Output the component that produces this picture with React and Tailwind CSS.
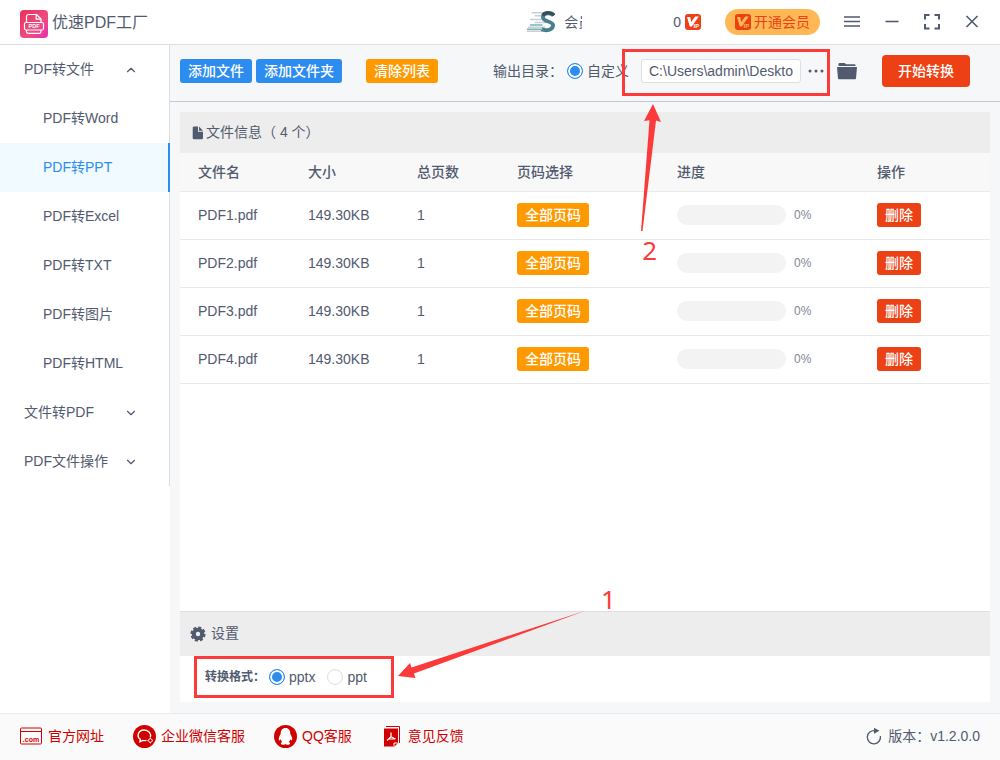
import React, { useState } from 'react';
import { ChevronDown, ChevronUp } from 'lucide-react';

const FORMATS = ['Word', 'PPT', 'Excel', 'TXT', '图片', 'HTML'];

const FILES = [
  { name: 'PDF1.pdf', size: '149.30KB', pages: 1, progress: 0 },
  { name: 'PDF2.pdf', size: '149.30KB', pages: 1, progress: 0 },
  { name: 'PDF3.pdf', size: '149.30KB', pages: 1, progress: 0 },
  { name: 'PDF4.pdf', size: '149.30KB', pages: 1, progress: 0 },
];

const RADIO =
  'h-4 w-4 shrink-0 appearance-none rounded-full border border-[#dcdee2] bg-white checked:border-[#2d8cf0] checked:bg-[#2d8cf0] checked:shadow-[inset_0_0_0_2px_#fff]';

function Logo() {
  return (
    <svg width="28" height="28" viewBox="0 0 28 28" aria-hidden="true">
      <defs>
        <linearGradient id="logoFill" x1="0" y1="0" x2="1" y2="1">
          <stop offset="0" stopColor="#ea2f5c" />
          <stop offset="0.6" stopColor="#ee4c80" />
          <stop offset="1" stopColor="#ea2bb0" />
        </linearGradient>
      </defs>
      <rect width="28" height="28" rx="4" fill="url(#logoFill)" />
      <g fill="none" stroke="#fff" strokeWidth="1.2" strokeLinejoin="round">
        <path d="M6.500 12V6.500a2 2 0 0 1 2-2h8l4.500 4.500v3" />
        <path d="M16.200 4.800V9.200H21" />
        <rect x="4.500" y="12.500" width="19" height="7.500" rx="1.500" />
        <path d="M6.500 20v1.800a1.500 1.500 0 0 0 1.500 1.500h11.500a1.500 1.500 0 0 0 1.500-1.500V20" />
      </g>
      <text x="14" y="18.300" textAnchor="middle" fontSize="5.500" fontWeight="700" fill="#fff" fontFamily="Liberation Sans, sans-serif">
        PDF
      </text>
    </svg>
  );
}

function Avatar() {
  return (
    <svg width="29" height="24" viewBox="0 0 30 24" aria-hidden="true">
      <g stroke="#c3d0d4" strokeWidth="1.500">
        <path d="M5 2.500h14M8 5.500h10M3 9.500h12M8 12.500h12M1 17.500h18M0 21.500h17" />
      </g>
      <path d="M27.500 5.500C25 2 17 2 16.500 7c0 5 10.500 4 10.500 8.500-.5 5-7 6-12 4" fill="none" stroke="#4a7f8a" strokeWidth="4" />
      <path d="M28 5C25 1.500 18 1.500 16.500 5.500" fill="none" stroke="#35505a" strokeWidth="3.500" />
      <path d="M3 15h13M0 19.500h16" stroke="#7fb0b4" strokeWidth="1.500" />
    </svg>
  );
}

function VipIcon({ letter = '#fff' }) {
  return (
    <svg width="16" height="16" viewBox="0 0 16 16" aria-hidden="true" className="shrink-0">
      <rect width="16" height="16" rx="3" fill="#ed4014" />
      <path d="M2 3h3.200l1 5L10.200 2.500h3.600L6.800 12.500H4.800z" fill={letter} />
      <text x="8.500" y="13.800" fontSize="6" fontWeight="700" fill={letter} fontFamily="Liberation Sans, sans-serif">
        IP
      </text>
    </svg>
  );
}

function WindowButton({ label, children }) {
  return (
    <button type="button" aria-label={label} className="flex h-6 w-4 items-center justify-center">
      <svg width="16" height="16" viewBox="0 0 16 16" fill="none" stroke="#515a6e" strokeWidth="1.600" aria-hidden="true">
        {children}
      </svg>
    </button>
  );
}

function Header() {
  return (
    <header className="flex h-[45px] items-center border-b border-[#dcdee2] bg-white px-5">
      <div className="mt-1 flex items-center gap-1">
        <Logo />
        <h1 className="pb-0.5 text-base leading-6">优速PDF工厂</h1>
      </div>
      <div className="ml-auto flex items-center">
        <Avatar />
        <span className="ml-2 w-[18px] overflow-hidden whitespace-nowrap">会员</span>
        <span className="ml-[91px]">0</span>
        <span className="ml-1">
          <VipIcon />
        </span>
        <button type="button" className="ml-6 flex h-[26px] items-center gap-[3px] rounded-[13px] bg-[#ffb855] px-[10px] text-[#ed4014]">
          <VipIcon letter="#ffb855" />
          开通会员
        </button>
        <div className="ml-6 flex gap-6">
          <WindowButton label="菜单">
            <path d="M0 3h16M0 7.500h16M0 12h16" />
          </WindowButton>
          <WindowButton label="最小化">
            <path d="M1.500 7.500h13" />
          </WindowButton>
          <WindowButton label="最大化">
            <path d="M1 5.500V1h4.500M10.500 1H15v4.500M15 10v4.500h-4.500M5.500 14.500H1V10" strokeWidth="2" />
          </WindowButton>
          <WindowButton label="关闭">
            <path d="M2.500 2l11 11M13.500 2l-11 11" />
          </WindowButton>
        </div>
      </div>
    </header>
  );
}

function MenuGroup({ title, open, onClick }) {
  const Chevron = open ? ChevronUp : ChevronDown;
  return (
    <button type="button" onClick={onClick} aria-expanded={open} className="flex h-[49px] w-full items-center justify-between pl-6 pr-[31px] text-left">
      <span className="pb-0.5">{title}</span>
      <Chevron className="h-[14px] w-[14px]" strokeWidth={2} />
    </button>
  );
}

function Sidebar() {
  const [active, setActive] = useState('PPT');
  const [open, setOpen] = useState(true);

  return (
    <aside className="w-[170px] shrink-0 bg-white">
      <nav className="border-r border-[#dcdee2]">
        <MenuGroup title="PDF转文件" open={open} onClick={() => setOpen(!open)} />
        {open &&
          FORMATS.map((format) => (
            <button
              key={format}
              type="button"
              onClick={() => setActive(format)}
              className={
                active === format
                  ? '-mr-px flex h-[49px] w-[170px] items-center border-r-2 border-[#2d8cf0] bg-[#f0faff] pb-0.5 pl-[43px] text-[#2d8cf0]'
                  : 'flex h-[49px] w-full items-center pb-0.5 pl-[43px]'
              }
            >
              PDF转{format}
            </button>
          ))}
        <MenuGroup title="文件转PDF" open={false} />
        <MenuGroup title="PDF文件操作" open={false} />
      </nav>
    </aside>
  );
}

function SmallButton({ color, className, children }) {
  const colors = {
    blue: 'bg-[#2d8cf0]',
    orange: 'bg-[#ff9900]',
    red: 'bg-[#ed4014]',
  };
  return (
    <button type="button" className={`h-6 rounded-[3px] px-2 font-medium leading-6 text-white ${colors[color]} ${className || ''}`}>
      {children}
    </button>
  );
}

function Toolbar() {
  return (
    <div className="relative flex h-[57px] items-center border-b border-[#c5c8ce] pb-1 pl-[10px] pr-[30px]">
      <SmallButton color="blue">添加文件</SmallButton>
      <SmallButton color="blue" className="ml-1">添加文件夹</SmallButton>
      <SmallButton color="orange" className="ml-6">清除列表</SmallButton>

      <div className="ml-auto flex items-center">
        <span>输出目录：</span>
        <label className="ml-1 flex items-center gap-1">
          <input type="radio" name="output" defaultChecked className={RADIO} />
          自定义
        </label>
        <input
          type="text"
          aria-label="输出路径"
          defaultValue="C:\Users\admin\Deskto"
          className="ml-3 h-6 w-40 rounded-[3px] border border-[#dcdee2] bg-white px-[7px]"
        />
        <button type="button" aria-label="选择目录" className="ml-[7px]">
          <svg width="16" height="16" viewBox="0 0 16 16" fill="#515a6e" aria-hidden="true">
            <circle cx="2" cy="8" r="1.500" />
            <circle cx="8" cy="8" r="1.500" />
            <circle cx="14" cy="8" r="1.500" />
          </svg>
        </button>
        <button type="button" aria-label="打开目录" className="ml-[13px]">
          <svg width="20" height="18" viewBox="0 0 20 18" fill="#515a6e" aria-hidden="true">
            <path d="M1.500 4V2a1 1 0 0 1 1-1h5.200l1.300 1.300h8.500a1 1 0 0 1 1 1V4z" />
            <path d="M0 5h20l-1 11.500a1 1 0 0 1-1 .8H2a1 1 0 0 1-1-.8z" />
          </svg>
        </button>
        <button type="button" className="ml-[25px] h-8 rounded bg-[#ed4014] px-4 font-medium text-white">
          开始转换
        </button>
      </div>

      {/* step 2: output folder */}
      <div className="pointer-events-none absolute right-[170px] top-1 h-[47px] w-[208px] border-3 border-[#fc3a3a]" />
      <svg className="pointer-events-none absolute right-[338px] top-[58px]" width="22" height="130" viewBox="0 0 22 130" fill="#fc3a3a" aria-hidden="true">
        <path d="M13 1l8 18-5-1.500L2.500 128H1L9.500 17.200 4 18z" />
      </svg>
      <span className="pointer-events-none absolute right-[343px] top-[189px] font-['Noto_Sans'] text-[26px] leading-8 text-[#fc3a3a]">2</span>
    </div>
  );
}

function FileTable() {
  return (
    <table className="w-full table-fixed border-collapse text-left">
      <colgroup>
        <col className="w-[110px]" />
        <col className="w-[109px]" />
        <col className="w-[100px]" />
        <col className="w-[160px]" />
        <col className="w-[200px]" />
        <col />
      </colgroup>
      <thead>
        <tr className="h-[38px] border-b border-[#e8eaec] bg-[#f8f8f9]">
          {['文件名', '大小', '总页数', '页码选择', '进度', '操作'].map((title) => (
            <th key={title} className="p-0 pl-[18px] font-medium">{title}</th>
          ))}
        </tr>
      </thead>
      <tbody>
        {FILES.map((file) => (
          <tr key={file.name} className="h-12 border-b border-[#e8eaec]">
            <td className="p-0 pl-[18px]">{file.name}</td>
            <td className="p-0 pl-[18px]">{file.size}</td>
            <td className="p-0 pl-[18px]">{file.pages}</td>
            <td className="p-0 pl-[18px]">
              <SmallButton color="orange">全部页码</SmallButton>
            </td>
            <td className="p-0 pl-[18px]">
              <div className="flex items-center">
                <div className="h-5 w-[109px] overflow-hidden rounded-full bg-[#f3f3f3]">
                  <div className="h-full bg-[#2d8cf0]" style={{ width: `${file.progress}%` }} />
                </div>
                <span className="ml-2 text-xs text-[#808695]">{file.progress}%</span>
              </div>
            </td>
            <td className="p-0 pl-[18px]">
              <SmallButton color="red">删除</SmallButton>
            </td>
          </tr>
        ))}
      </tbody>
    </table>
  );
}

function Settings() {
  const [format, setFormat] = useState('pptx');

  return (
    <section className="bg-white">
      <h2 className="flex h-[45px] items-center gap-[5px] border-t border-[#dcdee2] bg-[#ededed] pl-[10px]">
        <svg width="16" height="16" viewBox="0 0 16 16" aria-hidden="true">
          <circle cx="8" cy="8" r="4.200" fill="none" stroke="#515a6e" strokeWidth="4" />
          <circle cx="8" cy="8" r="6.600" fill="none" stroke="#515a6e" strokeWidth="2" strokeDasharray="3.200 1.984" />
        </svg>
        <span className="pb-0.5">设置</span>
      </h2>
      <div className="relative flex h-[46px] items-center pb-1 pl-[25px]">
        <span className="text-xs font-bold">转换格式：</span>
        {['pptx', 'ppt'].map((value) => (
          <label key={value} className="ml-1 mr-2 flex items-center gap-1">
            <input
              type="radio"
              name="format"
              checked={format === value}
              onChange={() => setFormat(value)}
              className={RADIO}
            />
            {value}
          </label>
        ))}

        {/* step 1: target format */}
        <div className="pointer-events-none absolute left-[14px] top-0 h-[42px] w-[200px] border-3 border-[#fc3a3a]" />
        <svg className="pointer-events-none absolute left-[218px] top-[-46px]" width="190" height="70" viewBox="0 0 190 70" fill="#fc3a3a" aria-hidden="true">
          <path d="M0 66l12-13 1.500 4.500L188 .5 16 63.500l1.500 4.500z" />
        </svg>
        <span className="pointer-events-none absolute left-[421px] top-[-73px] font-['Noto_Sans'] text-[26px] leading-8 text-[#fc3a3a]">1</span>
      </div>
    </section>
  );
}

function Footer() {
  return (
    <footer className="flex h-[47px] items-center border-t border-[#e8eaec] bg-[#fafafa] px-5 pb-0.5 text-[#d00000]">
      <a href="#site" className="flex items-center gap-[6px]">
        <svg width="22" height="18" viewBox="0 0 22 18" fill="none" stroke="#d00000" aria-hidden="true">
          <rect x="0.500" y="1" width="21" height="16" rx="1" />
          <path d="M0.500 4.500h21" />
          <text x="11" y="14.500" textAnchor="middle" fontSize="7" fontWeight="700" fill="#d00000" stroke="none" fontFamily="Liberation Sans, sans-serif">
            .com
          </text>
        </svg>
        官方网址
      </a>
      <a href="#wechat" className="ml-[29px] flex items-center gap-[5px]">
        <svg width="23" height="23" viewBox="0 0 23 23" fill="none" stroke="#fff" aria-hidden="true">
          <circle cx="11.500" cy="11.500" r="11.500" fill="#d00000" stroke="none" />
          <path d="M13.500 15.300c-1.200.4-2.600.4-3.800.1L7 16.700l.3-2.400C3 11 5.500 5 11 5c4.800 0 7.500 3.800 6.300 7.300" strokeWidth="1.400" />
          <path d="M17.300 12.800l1 1.700 1.700 1-1.700 1-1 1.700-1-1.700-1.700-1 1.700-1z" />
        </svg>
        企业微信客服
      </a>
      <a href="#qq" className="ml-[29px] flex items-center gap-[5px]">
        <svg width="23" height="23" viewBox="0 0 23 23" aria-hidden="true">
          <circle cx="11.500" cy="11.500" r="11.500" fill="#d00000" />
          <path d="M11.500 3C8 3 6.600 5.500 6.700 9c-1.500 2.200-2.400 4.700-1.700 6.500.6 0 1.200-.5 1.700-1.300.3 1.300.9 2.200 1.700 2.900-1.200.4-1.900 1.200-1.400 2 .8 1 3.500.8 4.500-.2 1 1 3.700 1.200 4.500.2.500-.8-.2-1.600-1.400-2 .8-.7 1.400-1.600 1.700-2.900.5.800 1.100 1.300 1.700 1.300.7-1.800-.2-4.300-1.700-6.500C16.400 5.500 15 3 11.500 3z" fill="#fff" />
        </svg>
        QQ客服
      </a>
      <a href="#feedback" className="ml-8 flex items-center gap-2">
        <svg width="16" height="21" viewBox="0 0 16 21" aria-hidden="true">
          <path d="M2 .5h13.500V17" fill="none" stroke="#d00000" />
          <path d="M0 2.500h14V17l-3.500 3.500H0z" fill="#d00000" />
          <path d="M10 20V17h3.500" fill="none" stroke="#fff" />
          <path d="M7 6.500v4.200M7 10.700L3 14.500M7 10.700l4.500 2.300M4.500 13h6" fill="none" stroke="#fff" strokeWidth="1.200" />
        </svg>
        意见反馈
      </a>
      <span className="ml-auto flex items-center gap-[6px] text-[#515a6e]">
        <svg width="16" height="18" viewBox="0 0 16 18" aria-hidden="true">
          <path d="M9 3.700A6.600 6.600 0 1 0 14.400 9" fill="none" stroke="#515a6e" strokeWidth="1.300" />
          <path d="M8 .8l5.500 3L8 6.800z" fill="#515a6e" />
        </svg>
        版本：v1.2.0.0
      </span>
    </footer>
  );
}

export default function App() {
  return (
    <div className="flex min-h-screen flex-col bg-white font-['Liberation_Sans','Noto_Sans_CJK_SC',sans-serif] text-sm text-[#515a6e]">
      <Header />
      <div className="flex flex-1">
        <Sidebar />
        <main className="flex min-w-0 flex-1 flex-col bg-[#f5f7f9]">
          <Toolbar />
          <div className="flex flex-1 flex-col px-[10px] pb-[11px] pt-[10px]">
            <section className="flex-1 bg-white">
              <h2 className="flex h-[41px] items-center gap-[2px] bg-[#ededed] pl-3">
                <svg width="12" height="14" viewBox="0 0 12 14" fill="#515a6e" aria-hidden="true">
                  <path d="M1.500.5H6v5.300h5V12a1.300 1.300 0 0 1-1.300 1.300H2A1.300 1.300 0 0 1 .7 12V1.500z" />
                  <path d="M7 .5l4 4.300H7z" />
                </svg>
                <span className="pb-0.5">文件信息（ {FILES.length} 个）</span>
              </h2>
              <FileTable />
            </section>
            <Settings />
          </div>
        </main>
      </div>
      <Footer />
    </div>
  );
}
